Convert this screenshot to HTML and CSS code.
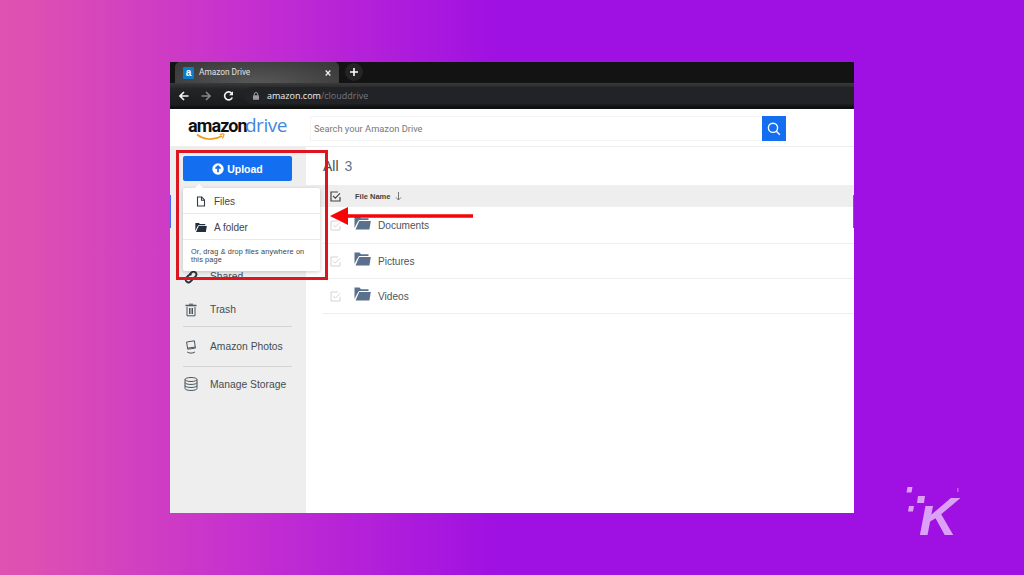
FILE: index.html
```
<!DOCTYPE html>
<html lang="en">
<head>
    <meta charset="UTF-8">
    <meta name="viewport" content="width=device-width, initial-scale=1.0">
    <title>Amazon Drive</title>
    <link rel="stylesheet" href="styles.css">
</head>
<body>
    <div class="window">
        <!-- Browser tabs -->
        <div class="tab-bar">
            <div class="tab">
                <span class="favicon">a</span>
                <span class="tab-title">Amazon Drive</span>
                <svg class="tab-close" width="6" height="6" viewBox="0 0 6 6"><path d="M.7.5l4.6 5M5.3.5l-4.6 5"/></svg>
            </div>
            <div class="new-tab">
                <svg width="8" height="8" viewBox="0 0 8 8"><path d="M4 0v8M0 4h8"/></svg>
            </div>
        </div>

        <!-- Address bar -->
        <div class="toolbar">
            <svg class="nav-icon" width="10" height="10" viewBox="0 0 10 10"><path d="M9.5 5H1M5 1L1 5l4 4"/></svg>
            <svg class="nav-icon dim" width="10" height="10" viewBox="0 0 10 10"><path d="M.5 5H9M5 1l4 4-4 4"/></svg>
            <svg class="nav-icon" width="11" height="10" viewBox="0 0 11 10"><path d="M8.7 2.3A4 4 0 1 0 9.3 6.5"/><path class="fill" d="M10 .3v4H6z"/></svg>
            <div class="address">
                <svg width="6" height="8" viewBox="0 0 6 8"><path d="M1.3 3.5V2.2a1.7 1.7 0 0 1 3.4 0v1.3" fill="none" stroke="#9c9c9e"/><rect y="3.2" width="6" height="4.5" rx=".5" fill="#9c9c9e"/></svg>
                <span class="url"><b>amazon.com</b>/clouddrive</span>
            </div>
        </div>

        <div class="header">
            <div class="logo">
                <div class="logo-text"><span class="logo-amazon">amazon</span><span class="logo-drive">drive</span></div>
                <svg class="smile" width="30" height="8" viewBox="0 0 30 8"><path d="M1 1.5c7 5.500 17 6 25 1.500" stroke-width="1.7"/><path d="M23.500 1.500c3-1 4.700-.8 4.500.2s-.8 2.500-1.800 3.600" stroke-width="1.2"/></svg>
            </div>
            <div class="search">
                <div class="search-input">Search your Amazon Drive</div>
                <div class="search-button">
                    <svg width="14" height="14" viewBox="0 0 14 14"><circle cx="6" cy="5.8" r="4.6"/><path d="M9.3 9.2l3.500 3.600"/></svg>
                </div>
            </div>
        </div>

        <div class="content">
            <div class="sidebar">
                <div class="upload-button">
                    <svg width="12" height="12" viewBox="0 0 12 12"><circle cx="6" cy="6" r="5.7" fill="#fff"/><path d="M6 9.300V3.500M3.500 5.700L6 3.200l2.500 2.500" fill="none" stroke="#146ef0" stroke-width="1.7"/></svg>
                    Upload
                </div>
                <div class="nav">
                    <div class="nav-item">
                        <svg width="14" height="14" viewBox="0 0 14 14" class="link-icon"><path d="M5.5 4.500l2-2a2.800 2.800 0 0 1 4 4l-2 2a2.600 2.600 0 0 1-3 .5"/><path d="M8.500 9.500l-2 2a2.800 2.800 0 0 1-4-4l2-2a2.600 2.600 0 0 1 3-.5"/></svg>
                        <span>Shared</span>
                    </div>
                    <div class="nav-item">
                        <svg width="14" height="14" viewBox="0 0 14 14"><path d="M1.500 2.500h11" stroke-width="1.5"/><path d="M5 1.200h4M3 4v8.800h8V4M5.500 5v6M7 5v6M8.500 5v6"/></svg>
                        <span>Trash</span>
                    </div>
                    <div class="nav-item line">
                        <svg width="14" height="14" viewBox="0 0 14 14"><path d="M2.600 2l7.800-1.200 1 7.300-7.700 1.100zM3.600 8.200l7.700-1.200"/><path d="M3.200 12c2.400 1.500 5.200 1.500 7.800 0"/></svg>
                        <span>Amazon Photos</span>
                    </div>
                    <div class="nav-item line">
                        <svg width="14" height="14" viewBox="0 0 14 14"><ellipse cx="7" cy="2.5" rx="6" ry="2"/><path d="M1 2.500v9c0 2.600 12 2.600 12 0v-9M1 5.500c0 2.600 12 2.600 12 0M1 8.500c0 2.600 12 2.600 12 0"/></svg>
                        <span>Manage Storage</span>
                    </div>
                </div>
            </div>

            <div class="main">
                <div class="title">All <span>3</span></div>
                <div class="row head">
                    <svg class="check" width="11" height="11" viewBox="0 0 11 11"><path d="M10 6v4H1V1h7M3 4.800l2.300 2.300L10 2.400"/></svg>
                    <span class="file-name">File Name</span>
                    <svg class="sort" width="7" height="9" viewBox="0 0 7 9"><path d="M3.500 0v8M1 5.500L3.500 8 6 5.500"/></svg>
                </div>
                <div class="row">
                    <svg class="check" width="11" height="11" viewBox="0 0 11 11"><path d="M10 6v4H1V1h7M3 4.800l2.300 2.300L10 2.400"/></svg>
                    <svg class="folder" width="17" height="14" viewBox="0 0 17 14"><path d="M.5 12V.5h5L7 2.200h7.500v1.800H5L3 7z"/><path d="M5.300 5H16.800l-1.400 8.500H1.500z"/></svg>
                    <span>Documents</span>
                </div>
                <div class="row">
                    <svg class="check" width="11" height="11" viewBox="0 0 11 11"><path d="M10 6v4H1V1h7M3 4.800l2.300 2.300L10 2.400"/></svg>
                    <svg class="folder" width="17" height="14" viewBox="0 0 17 14"><path d="M.5 12V.5h5L7 2.200h7.500v1.800H5L3 7z"/><path d="M5.300 5H16.800l-1.400 8.500H1.500z"/></svg>
                    <span>Pictures</span>
                </div>
                <div class="row">
                    <svg class="check" width="11" height="11" viewBox="0 0 11 11"><path d="M10 6v4H1V1h7M3 4.800l2.300 2.300L10 2.400"/></svg>
                    <svg class="folder" width="17" height="14" viewBox="0 0 17 14"><path d="M.5 12V.5h5L7 2.200h7.500v1.800H5L3 7z"/><path d="M5.300 5H16.800l-1.400 8.500H1.500z"/></svg>
                    <span>Videos</span>
                </div>
            </div>
        </div>

        <!-- Upload menu -->
        <div class="menu">
            <div class="menu-item">
                <svg width="12" height="11" viewBox="0 0 12 11"><path d="M2.500 1h4.300l2.700 2.900V10h-7zM6.500 1v3.200h3" fill="none" stroke="#333b45" stroke-width="1.1"/></svg>
                <span>Files</span>
            </div>
            <div class="menu-item">
                <svg width="12" height="11" viewBox="0 0 17 14" fill="#232f3e"><path d="M.5 12V.5h5L7 2.200h7.500v1.600H4.800L3.200 6z"/><path d="M5.300 5H16.800l-1.400 8.500H1.500z"/></svg>
                <span>A folder</span>
            </div>
            <div class="menu-note">Or, drag &amp; drop files anywhere on<br>this page</div>
        </div>
        <div class="edge edge-left"></div>
        <div class="edge edge-right"></div>
    </div>

    <!-- Callout box and arrow -->
    <div class="callout"></div>
    <svg class="arrow" width="143" height="18" viewBox="0 0 143 18"><path d="M0 9L18 0v7.300h125v3.400H18V18z" fill="#f50408"/></svg>

    <div class="brand">
        <svg width="53" height="50" viewBox="0 0 53 50"><path d="M1.500 0h5l-1 5.500h-5zM12 9h7l-1 7h-7zM3 19h5l-1 5.500H2zM51.500 1h.8v4h-.8z"/></svg>
        <span>K</span>
    </div>
</body>
</html>
```
FILE: styles.css
```
* {
    box-sizing: border-box;
}

body {
    margin: 0;
    height: 575px;
    padding: 62px 170px;
    overflow: hidden;
    position: relative;
    font-family: "Liberation Sans", Arial, sans-serif;
    background: linear-gradient(90deg, #e052b0 0, #de50b2 30px, #c42fd0 250px, #9f10e2 500px);
}

svg {
    display: block;
    flex: none;
}

.window {
    position: relative;
    width: 684px;
    height: 451px;
    background: #fff;
    display: flex;
    flex-direction: column;
}

/* Browser chrome */
.tab-bar {
    height: 21px;
    background: #131313;
    display: flex;
    padding-left: 5px;
}

.tab {
    width: 164px;
    padding: 0 8px;
    display: flex;
    align-items: center;
    background: radial-gradient(ellipse at 50% 100%, #575757, #3a3a3a 90%);
    border-radius: 5px 5px 0 0;
    color: #e2e2e2;
}

.favicon {
    width: 11px;
    height: 12px;
    background: #0d7cc6;
    border-radius: 1px;
    color: #fff;
    font-size: 10px;
    font-weight: bold;
    line-height: 11px;
    text-align: center;
}

.tab-title {
    margin: -1px 0 0 5px;
    font-family: Roboto, sans-serif;
    font-size: 8.3px;
}

.tab-close {
    margin-left: auto;
    fill: none;
    stroke: #eee;
    stroke-width: 1.3;
}

.new-tab {
    width: 18px;
    height: 18px;
    margin: 1px 0 0 6px;
    border-radius: 50%;
    background: #242424;
    display: flex;
    align-items: center;
    justify-content: center;
}

.new-tab svg {
    stroke: #fff;
    stroke-width: 1.6;
}

.toolbar {
    height: 26px;
    padding: 0 0 1px 9px;
    display: flex;
    align-items: center;
    gap: 12px;
    background: linear-gradient(#3a3a3b 0, #232426 6px, #1b1c1e 22px, #101010 24px);
}

.nav-icon {
    fill: none;
    stroke: #f4f4f4;
    stroke-width: 1.6;
}

.nav-icon .fill {
    fill: #f4f4f4;
    stroke: none;
}

.dim {
    stroke: #858585;
}

.address {
    flex: 1;
    height: 17px;
    margin-left: -2px;
    padding-left: 9px;
    border-radius: 9px 0 0 9px;
    background: #222327;
    display: flex;
    align-items: center;
    gap: 8px;
}

.url {
    font-family: "Open Sans", sans-serif;
    font-size: 9px;
    color: #77787c;
}

.url b {
    font-weight: normal;
    color: #f0f0f0;
}

/* Header */
.header {
    height: 38px;
    border-bottom: 1px solid #eee;
    display: flex;
    padding: 7px 0 0 18px;
}

.logo {
    width: 122px;
}

.logo-text {
    display: flex;
    align-items: baseline;
    height: 19px;
    line-height: 19px;
}

.logo-amazon {
    width: 57px;
    font-family: Roboto, sans-serif;
    font-size: 18px;
    font-weight: bold;
    letter-spacing: -0.9px;
    color: #111;
}

.logo-drive {
    font-family: "Open Sans", sans-serif;
    font-size: 19px;
    letter-spacing: -0.5px;
    color: #4287dc;
}

.smile {
    margin: -2px 0 0 8px;
    fill: none;
    stroke: #f09b22;
}

.search {
    display: flex;
    height: 25px;
}

.search-input {
    width: 452px;
    padding-left: 3px;
    border: 1px solid #f4f4f4;
    border-right: none;
    font-family: Roboto, sans-serif;
    font-size: 9.3px;
    line-height: 23px;
    color: #777;
}

.search-button {
    width: 24px;
    height: 25px;
    background: #146ef0;
    display: flex;
    align-items: center;
    justify-content: center;
}

.search-button svg {
    fill: none;
    stroke: #fff;
    stroke-width: 1.4;
}

.content {
    flex: 1;
    display: flex;
}

/* Sidebar */
.sidebar {
    width: 136px;
    padding: 9px 14px 0 13px;
    background: #eee;
}

.upload-button {
    height: 25px;
    background: #146ef0;
    border-radius: 2px;
    display: flex;
    align-items: center;
    justify-content: center;
    gap: 3px;
    color: #fff;
    font-size: 10.5px;
    font-weight: bold;
}

.nav {
    padding-top: 79px;
}

.nav-item {
    height: 33px;
    display: flex;
    align-items: center;
    gap: 12px;
    padding-left: 1px;
    font-size: 10.3px;
    color: #434d54;
}

.nav-item svg {
    fill: none;
    stroke: #4a555c;
}

.nav-item .link-icon {
    stroke: #2b3338;
    stroke-width: 1.8;
}

.nav-item.line {
    height: 40px;
    border-top: 1px solid #d4d4d4;
}

.nav-item.line:last-child {
    height: 35px;
}

/* File list */
.main {
    flex: 1;
    color: #4c545c;
}

.title {
    height: 38px;
    padding-left: 17px;
    font-size: 14px;
    line-height: 38px;
    color: #4a4a4a;
}

.title span {
    margin-left: 2px;
    color: #65758a;
}

.row {
    height: 35px;
    margin-left: 17px;
    padding-left: 7px;
    border-bottom: 1px solid #eee;
    display: flex;
    align-items: center;
    font-size: 10.1px;
}

.row.head {
    height: 22px;
    margin-left: 0;
    padding: 0 0 0 24px;
    background: #eee;
    border: none;
}

.head + .row {
    height: 37px;
}

.check {
    fill: none;
    stroke: #d4d4d4;
}

.head .check {
    stroke: #444;
    stroke-width: 1.2;
}

.folder {
    margin: -4px 7px 0 13px;
    fill: #5b708c;
}

.file-name {
    margin-left: 14px;
    font-size: 7.5px;
    font-weight: bold;
    color: #444;
}

.sort {
    margin-left: 5px;
    fill: none;
    stroke: #777;
}

/* Dropdown under the upload button */
.menu {
    position: absolute;
    left: 13px;
    top: 126px;
    width: 137px;
    height: 83px;
    background: #fff;
    border-radius: 2px;
    box-shadow: 0 1px 4px rgba(0, 0, 0, 0.2);
    color: #444;
}

.menu::before {
    content: "";
    position: absolute;
    left: 12px;
    top: -4px;
    border: 4px solid transparent;
    border-top: none;
    border-bottom-color: #fff;
}

.menu-item {
    height: 26px;
    padding: 1px 0 0 12px;
    border-bottom: 1px solid #e9e9e9;
    display: flex;
    align-items: center;
    gap: 7px;
    font-size: 10px;
}

.menu-note {
    padding: 8px 0 0 8px;
    font-size: 7.3px;
    letter-spacing: 0.14px;
    line-height: 8px;
}

.edge {
    position: absolute;
    top: 133px;
    width: 1px;
    height: 33px;
    background: #4269ef;
}

.edge-left {
    left: 0;
}

.edge-right {
    right: 0;
}

.callout {
    position: absolute;
    left: 176px;
    top: 150px;
    width: 152px;
    height: 130px;
    border: 3px solid #dc1520;
}

.arrow {
    position: absolute;
    left: 330px;
    top: 207px;
}

/* Logo in the corner */
.brand {
    position: absolute;
    left: 906px;
    top: 487px;
    fill: #dda0f7;
}

.brand span {
    position: absolute;
    left: 13px;
    top: 5px;
    font-size: 53px;
    line-height: 50px;
    font-weight: bold;
    font-style: italic;
    color: #dda0f7;
    /* the stem is shorter than the arm */
    clip-path: polygon(0 14px, 50% 14px, 50% 0, 130% 0, 130% 100%, 0 100%);
}
```
